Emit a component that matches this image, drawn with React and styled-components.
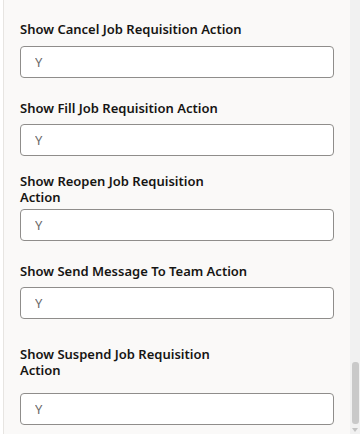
import { createGlobalStyle } from 'styled-components';
import styled from 'styled-components';

const GlobalStyle = createGlobalStyle`
  html, body {
    margin: 0;
    padding: 0;
    background: #ffffff;
  }
  body {
    font-family: "Noto Sans", "Open Sans", sans-serif;
  }
`;

const Page = styled.div`
  display: flex;
  width: 360px;
  height: 434px;
  overflow: hidden;
  padding-left: 3px;
  box-sizing: border-box;
`;

const Panel = styled.div`
  flex: 1;
  display: flex;
  flex-direction: column;
  background: #faf9f8;
  border-left: 1px solid #e7e5e2;
  padding: 21px 16px 0 16px;
  box-sizing: border-box;
`;

const Field = styled.div`
  display: flex;
  flex-direction: column;
  margin-top: ${p => p.$gap || 0}px;
`;

const Label = styled.label`
  font-size: 13px;
  line-height: 16px;
  font-weight: 600;
  color: #161513;
  margin-bottom: ${p => p.$after}px;
`;

const Input = styled.input`
  height: 32px;
  box-sizing: border-box;
  width: 100%;
  border: 1px solid #8f8d8b;
  border-radius: 4px;
  background: #ffffff;
  padding: 0 14px;
  font-family: "Noto Sans", "Open Sans", sans-serif;
  font-size: 13px;
  color: #6b6a68;
  outline: none;
`;

const Track = styled.div`
  width: 10px;
  background: #f1f1f1;
  display: flex;
  flex-direction: column;
  align-items: center;
  justify-content: flex-end;
  padding-bottom: 2px;
  box-sizing: border-box;
`;

const Thumb = styled.div`
  width: 7px;
  height: 62px;
  border-radius: 3px;
  background: #c9c9c9;
`;

const Arrow = styled.div`
  width: 0;
  height: 0;
  margin-top: 4px;
  border-left: 3px solid transparent;
  border-right: 3px solid transparent;
  border-top: 4px solid #c3c3c3;
`;

const fields = [
  { lines: ['Show Cancel Job Requisition Action'], gap: 0, after: 9 },
  { lines: ['Show Fill Job Requisition Action'], gap: 22, after: 8 },
  { lines: ['Show Reopen Job Requisition', 'Action'], gap: 17, after: 4 },
  { lines: ['Show Send Message To Team Action'], gap: 22, after: 8 },
  { lines: ['Show Suspend Job Requisition', 'Action'], gap: 27, after: 15 },
];

function App() {
  return (
    <>
      <GlobalStyle />
      <Page>
        <Panel>
          {fields.map((f, i) => (
            <Field key={`field-${i}`} $gap={f.gap}>
              <Label $after={f.after} htmlFor={`field-input-${i}`}>
                {f.lines.map((line, j) => (
                  <span key={j}>
                    {j > 0 && <br />}
                    {line}
                  </span>
                ))}
              </Label>
              <Input id={`field-input-${i}`} type="text" defaultValue="Y" readOnly />
            </Field>
          ))}
        </Panel>
        <Track>
          <Thumb />
          <Arrow />
        </Track>
      </Page>
    </>
  );
}

export default App;
